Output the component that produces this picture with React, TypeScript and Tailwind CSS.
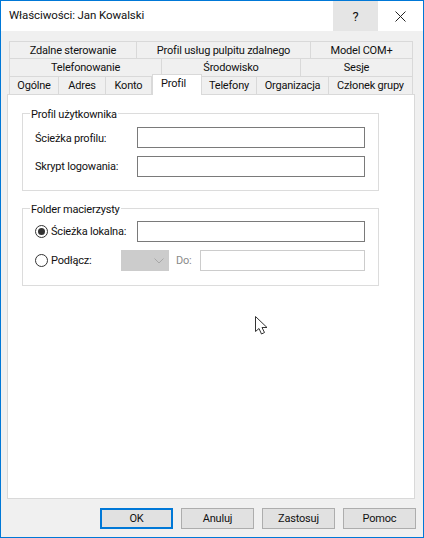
const font = "font-['Roboto',sans-serif] text-[11px] tracking-[-0.2px] leading-none text-[#111111]";

function Tab({ w, label }: { w: string; label: string }) {
  return (
    <div className={`${w} h-full flex items-center justify-center border-t border-r border-[#d9d9d9] first:border-l whitespace-nowrap`}>
      {label}
    </div>
  );
}

function Group({ title, top, children }: { title: string; top: string; children: React.ReactNode }) {
  return (
    <div className={`relative ${top} ml-[14px] w-[357px] h-[78px] border border-[#dcdcdc] pl-[12px] flex flex-col`}>
      <div className="absolute left-[7px] top-[-7px] bg-white px-[1px] h-[14px] flex items-center">{title}</div>
      {children}
    </div>
  );
}

function Btn({ label, active }: { label: string; active?: boolean }) {
  return (
    <div
      className={`w-[73px] h-[21px] flex items-center justify-center bg-[#e1e1e1] ${
        active ? "border-2 border-[#0078d7]" : "border border-[#adadad]"
      }`}
    >
      {label}
    </div>
  );
}

function Radio({ on }: { on?: boolean }) {
  return (
    <svg width="13" height="13" viewBox="0 0 13 13" className="shrink-0">
      <circle cx="6.5" cy="6.5" r="6" fill="#fff" stroke="#333" strokeWidth="1" />
      {on && <circle cx="6.5" cy="6.5" r="3.5" fill="#333" />}
    </svg>
  );
}

export default function App() {
  return (
    <div className={`${font} relative w-[424px] h-[538px] bg-[#f0f0f0] border border-[#0078d7] flex flex-col overflow-hidden`}>
      {/* title bar */}
      <div className="h-[30px] shrink-0 bg-white flex items-center pl-[8px]">
        <span className="text-[11.5px] tracking-[-0.1px] flex-1">Właściwości: Jan Kowalski</span>
        <div className="w-[45px] h-full bg-[#e5e5e5] flex items-center justify-center text-[13px]">?</div>
        <div className="w-[45px] h-full flex items-center justify-center">
          <svg width="11" height="11" viewBox="0 0 11 11">
            <path d="M0.5 0.5 L10.5 10.5 M10.5 0.5 L0.5 10.5" stroke="#222" strokeWidth="1" fill="none" />
          </svg>
        </div>
      </div>

      {/* tabs */}
      <div className="ml-[8px] mt-[10px] w-[404px] flex flex-col shrink-0">
        <div className="flex h-[17px]">
          <Tab w="w-[128px]" label="Zdalne sterowanie" />
          <Tab w="w-[174px]" label="Profil usług pulpitu zdalnego" />
          <Tab w="w-[102px]" label="Model COM+" />
        </div>
        <div className="flex h-[18px]">
          <Tab w="w-[153px]" label="Telefonowanie" />
          <Tab w="w-[139px]" label="Środowisko" />
          <Tab w="w-[112px]" label="Sesje" />
        </div>
        <div className="flex h-[18px] relative z-10">
          <Tab w="w-[50px]" label="Ogólne" />
          <Tab w="w-[47px]" label="Adres" />
          <Tab w="w-[46px]" label="Konto" />
          <div className="w-[50px] h-[21px] mt-[-2px] bg-white border-t border-x border-[#d9d9d9] flex justify-center pt-[3px] pr-[7px]">Profil</div>
          <Tab w="w-[55px]" label="Telefony" />
          <Tab w="w-[72px]" label="Organizacja" />
          <Tab w="w-[84px]" label="Członek grupy" />
        </div>
      </div>

      {/* panel */}
      <div className="ml-[6px] w-[408px] h-[405px] shrink-0 bg-white border border-[#d9d9d9]">
        <Group title="Profil użytkownika" top="mt-[18px]">
          <div className="flex items-center h-[21px] mt-[13px]">
            <span className="w-[102px] pt-[2px]">Ścieżka profilu:</span>
            <div className="w-[228px] h-[21px] border border-[#7a7a7a] bg-white" />
          </div>
          <div className="flex items-center h-[21px] mt-[8px]">
            <span className="w-[102px]">Skrypt logowania:</span>
            <div className="w-[228px] h-[21px] border border-[#7a7a7a] bg-white" />
          </div>
        </Group>

        <Group title="Folder macierzysty" top="mt-[17px]">
          <div className="flex items-center h-[21px] mt-[12px]">
            <Radio on />
            <span className="ml-[3px] w-[86px]">Ścieżka lokalna:</span>
            <div className="w-[228px] h-[21px] border border-[#7a7a7a] bg-white" />
          </div>
          <div className="flex items-center h-[21px] mt-[8px]">
            <Radio />
            <span className="ml-[3px] w-[70px]">Podłącz:</span>
            <div className="w-[48px] h-[21px] bg-[#cccccc] flex items-center justify-end pr-[5px]">
              <svg width="10" height="6" viewBox="0 0 10 6">
                <path d="M0.5 0.5 L5 5 L9.5 0.5" stroke="#a8a8a8" strokeWidth="1" fill="none" />
              </svg>
            </div>
            <span className="ml-[7px] w-[24px] text-[#8a8a8a]">Do:</span>
            <div className="w-[165px] h-[21px] border border-[#cccccc] bg-white" />
          </div>
        </Group>
      </div>

      {/* buttons */}
      <div className="mt-[9px] ml-[99px] flex gap-[8px]">
        <Btn label="OK" active />
        <Btn label="Anuluj" />
        <Btn label="Zastosuj" />
        <Btn label="Pomoc" />
      </div>

      {/* mouse pointer */}
      <svg width="14" height="20" viewBox="0 0 14 20" className="absolute left-[254px] top-[315px]">
        <path d="M0.5 0.5 V15.5 L4 12.5 L6.5 18 L9.5 16.5 L7 11.5 H12 Z" fill="#fff" stroke="#333" strokeWidth="1" />
      </svg>
    </div>
  );
}
